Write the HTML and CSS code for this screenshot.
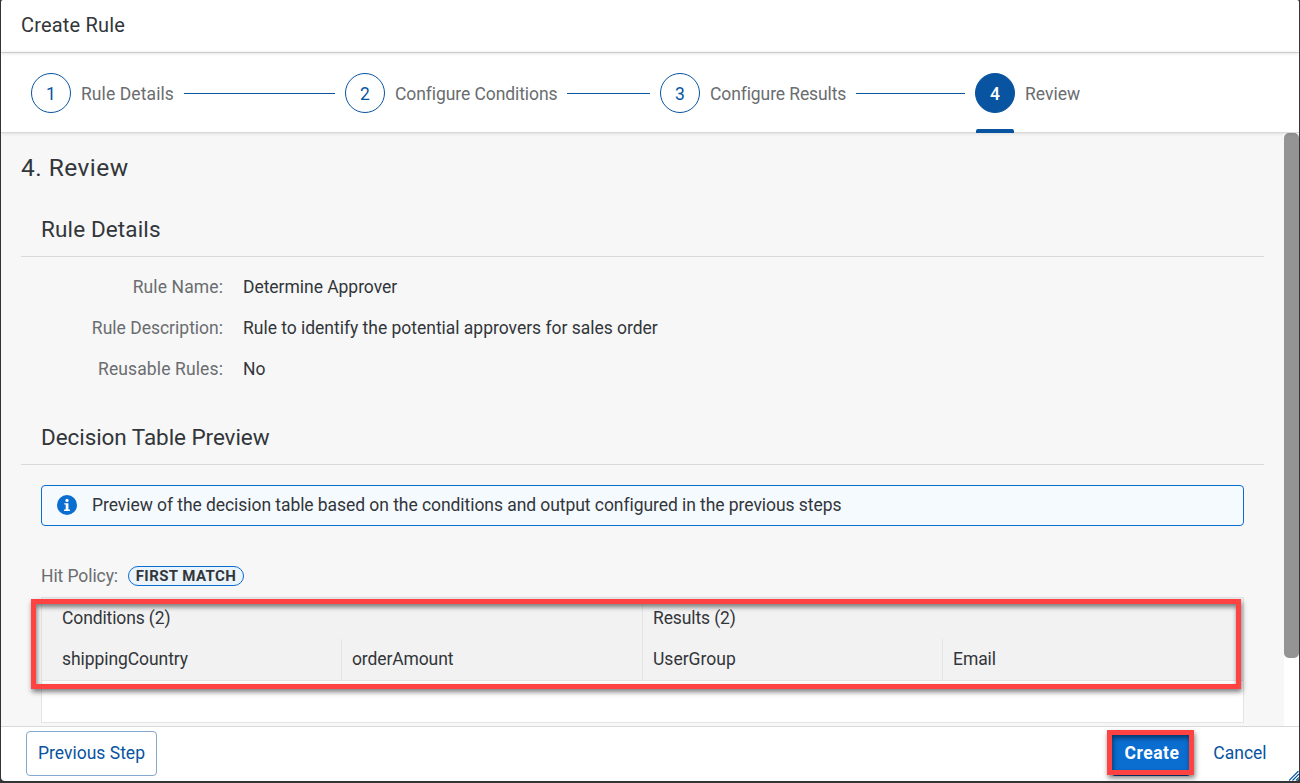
FILE: index.html
```
<!DOCTYPE html>
<html lang="en">
<head>
<meta charset="utf-8">
<title>Create Rule</title>
<link rel="stylesheet" href="styles.css">
</head>
<body>
<div class="dialog">
  <header class="header"><h1 class="header-title">Create Rule</h1></header>
  <nav class="steps">
    <div class="step"><span class="num">1</span><span class="step-label s1">Rule Details</span><span class="line"></span></div>
    <div class="step"><span class="num">2</span><span class="step-label s2">Configure Conditions</span><span class="line"></span></div>
    <div class="step"><span class="num">3</span><span class="step-label s3">Configure Results</span><span class="line"></span></div>
    <div class="step current"><span class="num">4</span><span class="step-label">Review</span></div>
  </nav>
  <div class="body">
    <main class="content">
      <h2 class="page-title">4. Review</h2>
      <section>
        <h3 class="section-title t1">Rule Details</h3>
        <dl class="form">
          <dt class="l1">Rule Name:</dt><dd class="v1">Determine Approver</dd>
          <dt>Rule Description:</dt><dd class="v2">Rule to identify the potential approvers for sales order</dd>
          <dt class="l3">Reusable Rules:</dt><dd>No</dd>
        </dl>
      </section>
      <section class="preview">
        <h3 class="section-title t2">Decision Table Preview</h3>
        <div class="strip">
          <svg class="info" width="20" height="20" viewBox="0 0 20 20"><circle cx="10" cy="10" r="10" fill="#0a6ed1"/><circle cx="10" cy="5.4" r="1.6" fill="#fff"/><path d="M7.3 8.2h4.1v6.2h1.5v1.5H7.1v-1.5h1.6V9.6H7.3z" fill="#fff"/></svg>
          <span class="strip-text">Preview of the decision table based on the conditions and output configured in the previous steps</span>
        </div>
        <div class="policy"><span class="policy-label">Hit Policy:</span><span class="badge">FIRST MATCH</span></div>
        <div class="table">
          <div class="group"><span class="g1">Conditions (2)</span></div>
          <div class="group split"><span class="g2">Results (2)</span></div>
          <div class="col"><span class="c1">shippingCountry</span></div>
          <div class="col split"><span class="c2">orderAmount</span></div>
          <div class="col split"><span>UserGroup</span></div>
          <div class="col split"><span class="c4">Email</span></div>
          <div class="empty"></div>
          <div class="mark mark-table"></div>
        </div>
      </section>
    </main>
    <div class="scrollbar"><div class="thumb"></div></div>
  </div>
  <footer class="footer">
    <button class="btn previous"><span>Previous Step</span></button>
    <button class="btn create"><span>Create</span><i class="mark mark-create"></i></button>
    <button class="btn cancel"><span>Cancel</span></button>
    <svg class="grip" width="10" height="10" viewBox="0 0 10 10" fill="none" stroke="#0854a0" stroke-width="1.2"><path d="M0 9.5 9.5 0M3.5 9.5 10 3M7 9.5 10 6.5"/></svg>
  </footer>
</div>
</body>
</html>
```
FILE: styles.css
```
* { box-sizing: border-box; }
body { margin: 0; width: 1300px; height: 783px; overflow: hidden; background: #333436; font-family: Roboto, "Liberation Sans", sans-serif; font-size: 17.5px; color: #32363a; }
h1, h2, h3, dl, dd { margin: 0; font-weight: 400; }
.dialog { width: 1298px; height: 781px; margin-left: 1px; background: #fff; border-radius: 2px 2px 4px 4px; overflow: hidden; display: flex; flex-direction: column; }
.header { height: 53px; flex: none; padding: 0 20px; border-bottom: 1px solid #d9d9d9; box-shadow: 0 0 4px rgba(0,0,0,.16); }
.header-title { font-size: 20px; line-height: 50px; letter-spacing: .18px; }
.steps { height: 80px; flex: none; display: grid; grid-template-columns: 314px 315px 315px 1fr; padding-left: 30px; border-bottom: 1px solid #d9d9d9; box-shadow: 0 0 4px rgba(0,0,0,.16); position: relative; z-index: 1; }
.step { display: flex; align-items: center; gap: 10px; padding-right: 10px; position: relative; }
.num { flex: none; width: 40px; height: 40px; border: 1px solid #0854a0; border-radius: 50%; color: #0854a0; text-align: center; line-height: 40px; }
.step-label { color: #6a6d70; white-space: nowrap; padding-top: 2px; }
.s1 { letter-spacing: .09px; }
.s2 { letter-spacing: -.08px; }
.s3 { letter-spacing: -.1px; }
.line { flex: 1; height: 1px; margin-top: 1px; background: #0854a0; }
.current .num { background: #0854a0; color: #fff; font-weight: 500; }
.current::after { content: ""; position: absolute; left: 1px; bottom: -1px; width: 38px; height: 4px; background: #0854a0; border-radius: 2px 2px 0 0; }
.body { flex: 1; min-height: 0; display: flex; background: #f7f7f7; overflow: hidden; }
.content { flex: 1; padding: 0 20px; min-width: 0; }
.page-title { font-size: 24.5px; line-height: 30px; padding: 20px 0 19px; letter-spacing: .45px; }
.section-title { font-size: 22.5px; height: 55px; line-height: 55px; padding-left: 20px; border-bottom: 1px solid #d9d9d9; }
.t1 { letter-spacing: .13px; }
.t2 { letter-spacing: -.07px; }
.form { display: grid; grid-template-columns: 202px 1fr; grid-auto-rows: 41px; column-gap: 20px; line-height: 41px; padding-top: 10px; white-space: nowrap; }
.form dt { text-align: right; color: #6a6d70; }
.l1, .l3 { letter-spacing: .12px; }
.v1 { letter-spacing: -.04px; }
.v2 { letter-spacing: -.02px; }
.preview { margin-top: 20px; }
.strip { height: 41px; margin: 20px 20px 0; border: 1px solid #0a6ed1; border-radius: 4px; background: #f5faff; display: flex; align-items: center; gap: 15px; padding: 0 0 2px 15px; white-space: nowrap; letter-spacing: -.06px; }
.info { margin-top: 1px; }
.policy { display: flex; align-items: center; gap: 10px; height: 20px; margin: 40px 20px 11px; }
.policy-label { color: #6a6d70; letter-spacing: -.08px; }
.badge { width: 116px; height: 20px; border: 1px solid #0a6ed1; border-radius: 10px; background: #ebf3fb; font-size: 15px; font-weight: 700; line-height: 18px; text-align: center; white-space: nowrap; letter-spacing: .42px; }
.table { position: relative; margin: 0 20px; height: 126px; border: 1px solid #e4e4e4; background: #f2f2f2; display: grid; grid-template-columns: 299px 301px 300px 1fr; grid-template-rows: 41px 42px 41px; line-height: 40px; }
.group { grid-column: span 2; }
.group, .col { padding-left: 20px; }
.split { padding-left: 10px; border-left: 1px solid #e4e4e4; }
.col { border-bottom: 1px solid #e4e4e4; }
.g1, .g2, .c2 { letter-spacing: -.12px; }
.c1, .c4 { letter-spacing: -.07px; }
.empty { grid-column: span 4; background: #fff; }
.mark { position: absolute; border: 5px solid #ff4343; box-shadow: 1px 3px 5px rgba(0,0,0,.5), inset 1px 3px 5px rgba(0,0,0,.5); }
.mark-table { left: -11px; top: 1px; width: 1210px; height: 90px; }
.scrollbar { width: 15px; background: #fff; }
.thumb { height: 525px; background: #949494; border-radius: 5px; }
.footer { height: 55px; flex: none; border-top: 1px solid #d9d9d9; display: flex; padding: 4px 20px 0 25px; position: relative; }
.btn { height: 45px; font: inherit; border: 1px solid transparent; border-radius: 4px; background: none; color: #0854a0; padding: 0 0 2px; white-space: nowrap; }
.previous { width: 131px; border-color: #83a9cf; }
.create { position: relative; width: 80px; margin-left: auto; background: #0a6ed1; color: #fff; font-weight: 700; letter-spacing: .5px; border-color: #0854a0; padding-left: 2px; }
.mark-create { left: -5px; top: -2px; width: 87px; height: 45px; }
.cancel { width: 78px; margin-left: 10px; }
.grip { position: absolute; right: 0; bottom: 0; }
```
